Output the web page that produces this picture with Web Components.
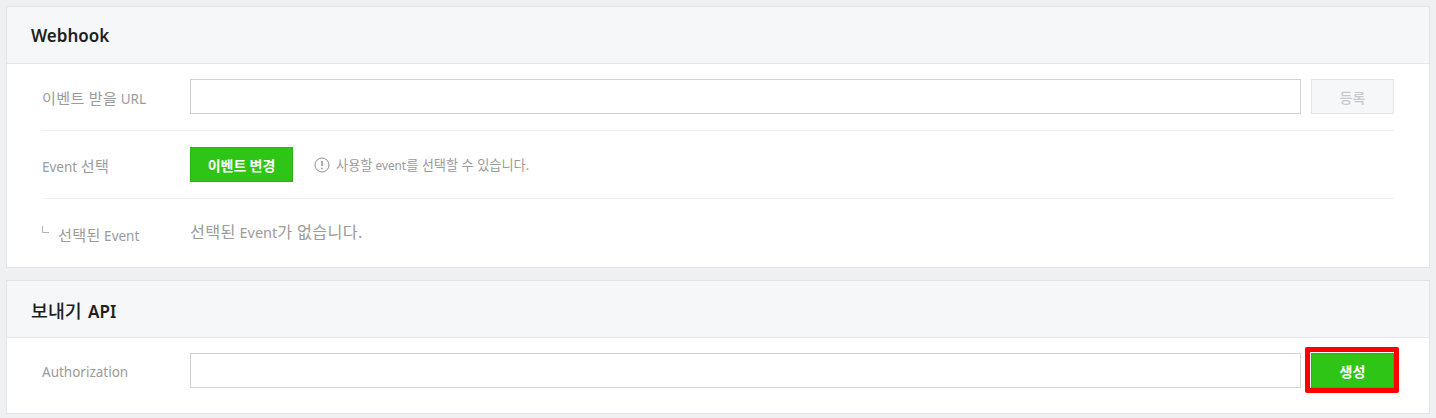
<!DOCTYPE html>
<html>
<head>
  <title>Webhook</title>
  <style>
    html, body { margin: 0; height: 100%; }
    body {
      background: #eef0f2;
      padding: 6px 6px 0;
      box-sizing: border-box;
      overflow: hidden;
      font-family: "Noto Sans", "Noto Sans CJK KR", sans-serif;
    }
    /* hangul runs a bit larger than the latin next to them */
    .k { font-size: 1.12em; letter-spacing: .3px; }
    .note { font-size: 1.12em; }
    .k2 { font-size: 1.08em; font-weight: 500; margin-right: 2px; }
  </style>
</head>
<body>
  <template id="panel-box">
    <style>
      :host { display: block; border: 1px solid #e2e4e7; background: #fff; margin-bottom: 12px; }
      header {
        height: 57px;
        box-sizing: border-box;
        background: #f6f7f9;
        border-bottom: 1px solid #e5e7ea;
        padding: 1px 0 0 24px;
        display: flex;
        align-items: center;
        font-size: 17px;
        font-weight: 600;
        color: #1e1e1e;
      }
      .body { padding: 0 35px; }
    </style>
    <header><slot name="title"></slot></header>
    <div class="body"><slot></slot></div>
  </template>

  <template id="form-row">
    <style>
      :host { display: flex; align-items: center; box-sizing: border-box; font-size: 13.5px; color: #9b9b9b; }
      :host([line]) { border-bottom: 1px solid #eef0f2; }
      .label { width: 148px; flex: none; padding-top: 1px; }
      .value { flex: 1; min-width: 0; display: flex; align-items: center; }
    </style>
    <div class="label"><slot name="label"></slot></div>
    <div class="value"><slot></slot></div>
  </template>

  <template id="line-button">
    <style>
      :host { display: inline-flex; position: relative; align-items: center; justify-content: center; box-sizing: border-box; height: 35px; font-size: 14px; font-weight: 700; flex: none; font-family: "Noto Sans CJK KR", sans-serif; }
      :host([variant=green]) { background: #2ec516; border: 1px solid #25b80f; color: #fff; }
      :host([variant=off]) { background: #f6f7f9; border: 1px solid #e2e4e7; color: #c5c9d2; font-weight: 500; }
      :host([marked])::after {
        content: "";
        position: absolute;
        left: -7px;
        top: -7px;
        right: -6px;
        bottom: -6px;
        border: 5px solid #f00;
        border-radius: 2px;
      }
    </style>
    <slot></slot>
  </template>

  <template id="text-box">
    <style>
      :host { display: block; flex: 1; height: 35px; box-sizing: border-box; background: #fff; border: 1px solid #d3d3d3; }
    </style>
  </template>

  <template id="info-note">
    <style>
      :host { display: inline-flex; align-items: center; gap: 6px; font-size: 11.8px; color: #9b9b9b; margin-left: 21px; }
      svg { width: 16px; height: 16px; flex: none; }
    </style>
    <svg viewBox="0 0 16 16" fill="none" stroke="#8f8f8f">
      <circle cx="8" cy="8" r="7" stroke-width="1"/>
      <path d="M8 4v5M8 10.8v1.4" stroke-width="1.4"/>
    </svg>
    <span><slot></slot></span>
  </template>

  <panel-box>
    <span slot="title">Webhook</span>
    <form-row line style="height:67px;padding-bottom:1px">
      <span slot="label"><span class="k">이벤트 받을</span> URL</span>
      <text-box></text-box>
      <line-button variant="off" style="width:83px;margin-left:10px">등록</line-button>
    </form-row>
    <form-row line style="height:68px">
      <span slot="label">Event <span class="k">선택</span></span>
      <line-button variant="green" style="width:103px">이벤트 변경</line-button>
      <info-note><span class="note">사용할</span> event<span class="note">를 선택할 수 있습니다.</span></info-note>
    </form-row>
    <form-row style="height:68px">
      <span slot="label" style="display:flex;align-items:center">
        <svg width="8" height="8" viewBox="0 0 8 8" fill="none" stroke="#b5b5b5" style="margin-right:8px;margin-top:-7px"><path d="M.5 0v6.5H7"/></svg><span><span class="k">선택된</span> Event</span></span>
      <span style="font-size:14.5px;margin-top:-4px"><span class="k">선택된</span> Event<span class="k">가 없습니다.</span></span>
    </form-row>
  </panel-box>

  <panel-box>
    <span slot="title"><span class="k2">보내기</span> API</span>
    <form-row style="height:75px;padding-bottom:10px">
      <span slot="label" style="position:relative;top:1px">Authorization</span>
      <text-box></text-box>
      <line-button variant="green" marked style="width:83px;margin-left:10px">생성</line-button>
    </form-row>
  </panel-box>

  <script>
    function define(name) {
      customElements.define(name, class extends HTMLElement {
        constructor() {
          super()
          const template = document.getElementById(name).content
          this.attachShadow({ mode: 'open' }).appendChild(template.cloneNode(true))
        }
      })
    }
    ;['panel-box', 'form-row', 'line-button', 'text-box', 'info-note'].forEach(define)
  </script>
</body>
</html>
